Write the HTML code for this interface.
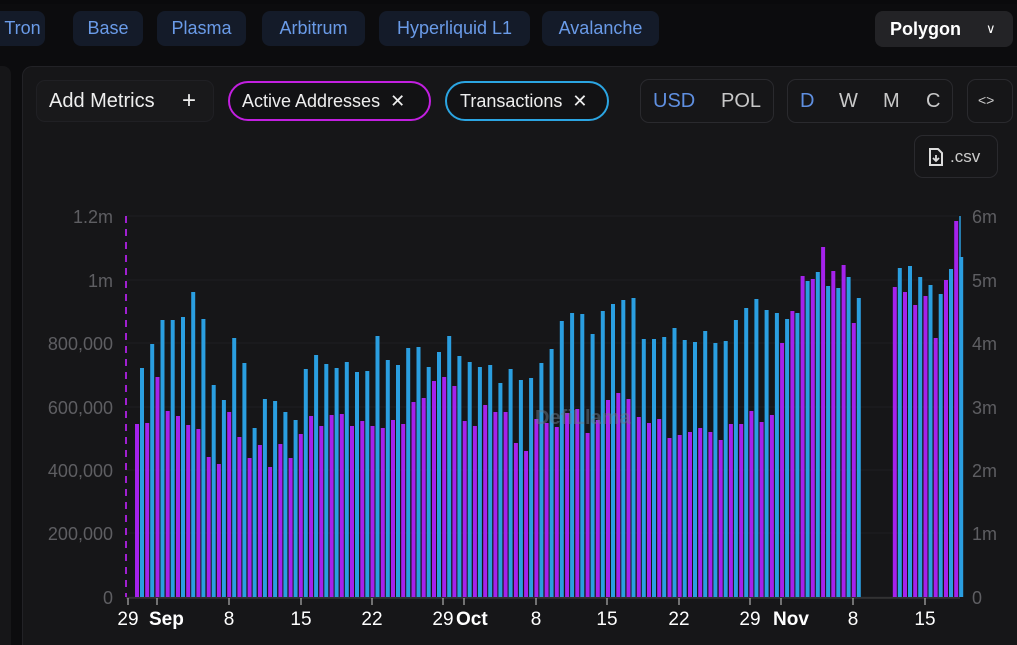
<!DOCTYPE html>
<html style="width:1017px;height:645px;overflow:hidden"><head><meta charset="utf-8"><style>
*{box-sizing:border-box;margin:0;padding:0}
body{width:1017px;height:645px;overflow:hidden;background:#0c0c0e;font-family:"Liberation Sans",sans-serif;position:relative}
.a{position:absolute}
.chip{position:absolute;top:11px;height:35px;background:#141b29;border-radius:8px;color:#6a9be8;font-size:18px;line-height:35px;text-align:center}
.panel{position:absolute;left:22px;top:66px;width:1010px;height:579px;background:#161618;border:1px solid #222226;border-bottom:none;border-radius:10px 10px 0 0}
.box{position:absolute;border:1px solid #2a2a2e;border-radius:9px;background:#161618}
.t{position:absolute;font-size:20px;color:#d8d8d8}
</style></head><body>
<div class="a" style="left:0;top:0;width:1017px;height:4px;background:#0a0a0c"></div>
<div class="chip" style="left:-10px;width:55px;">&nbsp;&nbsp;Tron</div>
<div class="chip" style="left:73px;width:70px">Base</div>
<div class="chip" style="left:157px;width:89px">Plasma</div>
<div class="chip" style="left:262px;width:103px">Arbitrum</div>
<div class="chip" style="left:379px;width:151px">Hyperliquid L1</div>
<div class="chip" style="left:542px;width:117px">Avalanche</div>
<div class="a" style="left:875px;top:11px;width:138px;height:36px;background:#232326;border-radius:8px;color:#fff;font-weight:bold;font-size:18px;line-height:36px;padding-left:15px">Polygon<span style="position:absolute;left:111px;top:0;font-weight:normal;font-size:13px">&#8744;</span></div>
<div class="a" style="left:0;top:66px;width:11px;height:579px;background:#161618;border-radius:0 8px 0 0"></div>
<div class="panel"></div>
<div class="box" style="left:36px;top:80px;width:178px;height:42px;border-color:#202024;background:#19191b"></div>
<div class="t" style="left:49px;top:90px;color:#eee">Add Metrics</div>
<div class="t" style="left:182px;top:87px;color:#eee;font-size:24px">+</div>
<div class="box" style="left:228px;top:81px;width:203px;height:40px;border:2.5px solid #c21fe0;border-radius:21px;background:#121214"></div>
<div class="t" style="left:242px;top:91px;color:#eee;font-size:18px">Active Addresses&nbsp;&nbsp;✕</div>
<div class="box" style="left:445px;top:81px;width:164px;height:40px;border:2.5px solid #2ba5e2;border-radius:21px;background:#121214"></div>
<div class="t" style="left:460px;top:91px;color:#eee;font-size:18px">Transactions&nbsp;&nbsp;✕</div>
<div class="box" style="left:640px;top:79px;width:134px;height:44px"></div>
<div class="t" style="left:653px;top:90px;color:#5f8fe0">USD</div>
<div class="t" style="left:721px;top:90px;color:#c8c8c8">POL</div>
<div class="box" style="left:787px;top:79px;width:166px;height:44px"></div>
<div class="t" style="left:800px;top:90px;color:#5f8fe0">D</div>
<div class="t" style="left:839px;top:90px;color:#c8c8c8">W</div>
<div class="t" style="left:883px;top:90px;color:#c8c8c8">M</div>
<div class="t" style="left:926px;top:90px;color:#c8c8c8">C</div>
<div class="box" style="left:967px;top:79px;width:46px;height:44px"></div>
<div class="t" style="left:978px;top:92px;color:#ccc;font-size:14px">&lt;&gt;</div>
<div class="box" style="left:914px;top:135px;width:84px;height:43px"></div>
<svg class="a" style="left:928px;top:148px" width="16" height="18" viewBox="0 0 16 18"><path d="M2 1h8l4 4v12H2z" fill="none" stroke="#ddd" stroke-width="2"/><path d="M8 7v6M5 10l3 3 3-3" stroke="#ddd" stroke-width="1.8" fill="none"/></svg>
<div class="t" style="left:950px;top:147px;color:#ccc;font-size:17px">.csv</div>
<svg id="c" class="a" style="left:0;top:0" width="1017" height="645"></svg>
<script>
var P=[424,423,377,411,416,425,429,457,464,412,437,458,445,467,444,458,434,416,426,415,414,426,421,426,428,420,424,402,398,381,377,386,421,426,405,412,412,443,451,419,423,427,413,409,433,420,400,393,399,417,423,419,438,435,432,428,432,440,424,424,411,422,415,343,311,276,279,247,271,265,323,0,0,0,287,292,305,296,338,280,221];
var B=[368,344,320,320,317,292,319,385,400,338,363,428,399,401,412,420,369,355,364,368,362,372,371,336,360,365,348,347,367,352,336,356,362,367,365,383,369,380,378,363,349,321,313,314,334,311,304,300,298,339,339,337,328,340,342,331,343,341,320,308,299,310,313,319,313,281,272,286,288,277,298,0,0,0,268,266,277,285,294,269,257];
var s='';
[[216,'1.2m','6m'],[280,'1m','5m'],[343,'800,000','4m'],[407,'600,000','3m'],[470,'400,000','2m'],[533,'200,000','1m'],[597,'0','0']].forEach(function(r){
 s+='<line x1="126" x2="958" y1="'+r[0]+'" y2="'+r[0]+'" stroke="#1f1f22"/>';
 s+='<text x="113" y="'+(r[0]+7)+'" text-anchor="end" fill="#5e5e62" font-size="18">'+r[1]+'</text>';
 s+='<text x="972" y="'+(r[0]+7)+'" fill="#5e5e62" font-size="18">'+r[2]+'</text>';
});
for(var i=0;i<P.length;i++){if(!P[i])continue;var x=135+i*10.24;
 s+='<rect x="'+x.toFixed(1)+'" y="'+P[i]+'" width="4" height="'+(597-P[i])+'" fill="#a522ec"/>';
 s+='<rect x="'+(x+5).toFixed(1)+'" y="'+B[i]+'" width="4" height="'+(597-B[i])+'" fill="#2a9ee0"/>';}
s+='<line x1="126" x2="126" y1="216" y2="597" stroke="#a020d0" stroke-width="2" stroke-dasharray="7,6"/>';
s+='<line x1="960" x2="960" y1="216" y2="597" stroke="#2a9ee0" stroke-width="1.5"/>';
s+='<line x1="126" x2="960" y1="598" y2="598" stroke="#444"/>';
[[128,'29',0],[157,'Sep',1],[229,'8',0],[301,'15',0],[372,'22',0],[443,'29',0],[464,'Oct',1],[536,'8',0],[607,'15',0],[679,'22',0],[750,'29',0],[781,'Nov',1],[853,'8',0],[925,'15',0]].forEach(function(t){
 s+='<line x1="'+t[0]+'" x2="'+t[0]+'" y1="598" y2="605" stroke="#ccc"/>';
 var anc=t[2]?'start':'middle';var xx=t[2]?t[0]-8:t[0];
 s+='<text x="'+xx+'" y="625" text-anchor="'+anc+'" fill="#fff" font-size="19" '+(t[2]?'font-weight="bold"':'')+'>'+t[1]+'</text>';
});
s+='<text x="535" y="424" fill="#6a7a8a" opacity="0.5" font-size="20" font-weight="bold">DefiLlama</text>';
document.getElementById('c').innerHTML=s;
</script>
</body></html>
